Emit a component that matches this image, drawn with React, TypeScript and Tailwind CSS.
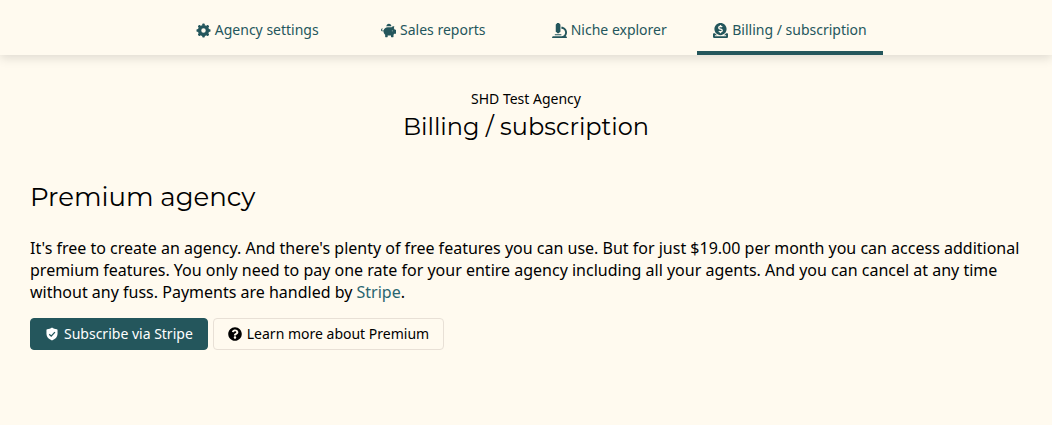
import type { ReactNode } from "react";
import { FaDonate, FaMicroscope, FaPiggyBank, FaQuestionCircle } from "react-icons/fa";

const toothAngles = [0, 45, 90, 135];

function GearIcon() {
  return (
    <svg width="15" height="15" viewBox="0 0 24 24" fill="none" stroke="currentColor" aria-hidden="true">
      <circle cx="12" cy="12" r="6.3" strokeWidth="5.4" />
      {toothAngles.map((angle) => (
        <g key={angle} transform={`rotate(${angle} 12 12)`} fill="currentColor" stroke="none">
          <path d="M9.6 4 10.1 1.5Q10.3.8 11 .8h2q.7 0 .9.7L14.4 4Z" />
          <path d="M9.6 20l.5 2.5q.2.7.9.7h2q.7 0 .9-.7l.5-2.5Z" />
        </g>
      ))}
    </svg>
  );
}

function ShieldIcon() {
  return (
    <svg width="14" height="14" viewBox="0 0 24 24" aria-hidden="true">
      <path
        fill="currentColor"
        d="M12 .8c-2.6 1.9-5.4 2.8-8.3 3-.7 0-1.2.5-1.2 1.2v7c0 5.2 4 8.9 9.5 11.2 5.5-2.3 9.5-6 9.5-11.2V5c0-.7-.5-1.2-1.2-1.2-2.9-.2-5.7-1.1-8.3-3Z"
      />
      <path d="m7.3 12.3 3.3 3.3 6.4-6.9" fill="none" stroke="#24565c" strokeWidth="2.2" />
    </svg>
  );
}

type Tab = { label: string; icon: ReactNode; active?: boolean };

const tabs: Tab[] = [
  { label: "Agency settings", icon: <GearIcon /> },
  { label: "Sales reports", icon: <FaPiggyBank size={15} /> },
  { label: "Niche explorer", icon: <FaMicroscope size={15} /> },
  { label: "Billing / subscription", icon: <FaDonate size={15} />, active: true },
];

export default function App() {
  return (
    <div className="min-h-screen bg-[#fffaef] font-['Noto_Sans',sans-serif] text-black">
      <header className="shadow-[0_3px_10px_rgba(0,0,0,0.13)]">
        <nav className="flex justify-center">
          {tabs.map((tab) => (
            <a
              key={tab.label}
              href="#"
              aria-current={tab.active ? "page" : undefined}
              className={`flex min-w-44 items-center justify-center gap-1 border-b-4 px-4 pt-5 pb-[11px] text-sm leading-5 text-[#24565c] ${
                tab.active ? "border-[#24565c]" : "border-transparent"
              }`}
            >
              {tab.icon}
              {tab.label}
            </a>
          ))}
        </nav>
      </header>

      <main className="px-[30px]">
        <div className="pt-[34px] text-center">
          <p className="text-sm leading-5">SHD Test Agency</p>
          <h1 className="font-['Montserrat',sans-serif] text-2xl leading-9">Billing / subscription</h1>
        </div>
        <h2 className="mt-8 font-['Montserrat',sans-serif] text-[26px] leading-10">Premium agency</h2>
        <p className="mt-5 text-base leading-[22px]">
          It's free to create an agency. And there's plenty of free features you can use. But for just $19.00 per month
          you can access additional premium features. You only need to pay one rate for your entire agency including all
          your agents. And you can cancel at any time without any fuss. Payments are handled by{" "}
          <a href="#" className="text-[#286570]">Stripe</a>.
        </p>
        <div className="mt-[15px] flex gap-[5px]">
          <button className="flex h-8 items-center gap-[5px] rounded border border-[#24565c] bg-[#24565c] px-3.5 text-sm text-white">
            <ShieldIcon />
            Subscribe via Stripe
          </button>
          <button className="flex h-8 items-center gap-[5px] rounded border border-[#e8e0d6] px-3.5 text-sm">
            <FaQuestionCircle size={14} />
            Learn more about Premium
          </button>
        </div>
      </main>
    </div>
  );
}
